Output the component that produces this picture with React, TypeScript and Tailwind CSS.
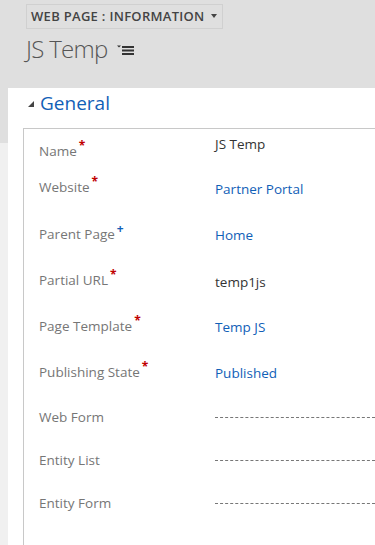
const rows = [
  { label: "Name", mark: "*", value: "JS Temp", kind: "text", h: "h-[36px]", off: "-mt-[7px]" },
  { label: "Website", mark: "*", value: "Partner Portal", kind: "link", h: "h-[47px]", off: "mt-[2px]" },
  { label: "Parent Page", mark: "+", value: "Home", kind: "link", h: "h-[46px]", off: "mt-[1px]" },
  { label: "Partial URL", mark: "*", value: "temp1js", kind: "text", h: "h-[46px]", off: "mt-[2px]" },
  { label: "Page Template", mark: "*", value: "Temp JS", kind: "link", h: "h-[46px]", off: "mt-[1px]" },
  { label: "Publishing State", mark: "*", value: "Published", kind: "link", h: "h-[45px]", off: "mt-[1px]" },
  { label: "Web Form", mark: "", value: "", kind: "empty", h: "h-[43px]", off: "" },
  { label: "Entity List", mark: "", value: "", kind: "empty", h: "h-[43px]", off: "" },
  { label: "Entity Form", mark: "", value: "", kind: "empty", h: "h-[43px]", off: "" },
];

const MenuIcon = () => (
  <svg width="17" height="10" viewBox="0 0 17 10" className="ml-[9px] mt-[2px]">
    <path d="M0 0.5 H4 L2 2.5 Z" fill="#333" />
    <rect x="5" y="1" width="12" height="2" fill="#333" />
    <rect x="5" y="4.5" width="12" height="2" fill="#333" />
    <rect x="5" y="8" width="12" height="2" fill="#333" />
  </svg>
);

export default function App() {
  return (
    <div className="h-[545px] w-[375px] overflow-hidden bg-[#f0f0f0] font-['Open_Sans',sans-serif]">
      <div className="h-[143px] bg-[#dfdfdf]">
        <div className="px-[26px] pt-[3px]">
          <div className="inline-flex h-[25px] w-[197px] items-center border border-[#d0d0d0] pl-[4px] text-[13px] font-semibold tracking-[0.3px] text-[#444]">
            WEB PAGE : INFORMATION
            <span className="ml-[6px] mb-[2px] inline-block h-0 w-0 border-x-[3.5px] border-t-[4px] border-x-transparent border-t-[#444]" />
          </div>
          <div className="mt-[4px] flex items-center">
            <span className="text-[24px] font-light leading-[32px] tracking-[-0.7px] text-[#555]">JS Temp</span>
            <MenuIcon />
          </div>
        </div>
      </div>
      <div className="ml-[8px] -mt-[55px] h-[460px] bg-white">
        <div className="flex h-[30px] items-center pl-[20px]">
          <span className="mr-[6px] mt-[2px] inline-block h-0 w-0 border-b-[6px] border-l-[6px] border-l-transparent border-b-[#444]" />
          <span className="text-[19px] leading-[24px] text-[#1160b7]">General</span>
        </div>
        <div className="ml-[15px] mt-[10px] h-[430px] border-l border-t border-[#c8c8c8] pl-[15px] pt-[12px]">
          {rows.map((r) => (
            <div key={r.label} className={`flex items-start ${r.h}`}>
              <div className="w-[176px] text-[13.5px] leading-[20px] text-[#767676]">
                {r.label}
                {r.mark && (
                  <sup
                    className={`ml-[2px] text-[12px] font-bold ${
                      r.mark === "*" ? "text-[#c00000]" : "text-[#1160b7]"
                    }`}
                  >
                    {r.mark}
                  </sup>
                )}
              </div>
              {r.kind === "empty" ? (
                <div className="mt-[10px] flex-1 border-t border-dashed border-[#777]" />
              ) : (
                <div
                  className={`${r.off} text-[13.5px] leading-[20px] ${
                    r.kind === "link" ? "text-[#1160b7]" : "text-[#333]"
                  }`}
                >
                  {r.value}
                </div>
              )}
            </div>
          ))}
        </div>
      </div>
    </div>
  );
}
